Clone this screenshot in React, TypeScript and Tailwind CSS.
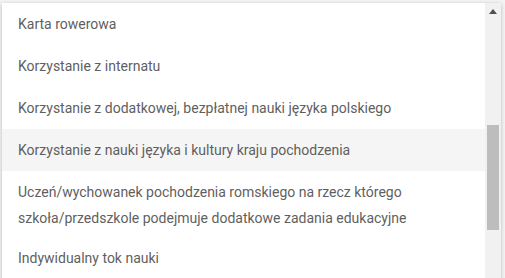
import React from "react";

const items: { label: string[]; active?: boolean }[] = [
  { label: ["Karta rowerowa"] },
  { label: ["Korzystanie z internatu"] },
  { label: ["Korzystanie z dodatkowej, bezpłatnej nauki języka polskiego"] },
  { label: ["Korzystanie z nauki języka i kultury kraju pochodzenia"], active: true },
  {
    label: [
      "Uczeń/wychowanek pochodzenia romskiego na rzecz którego",
      "szkoła/przedszkole podejmuje dodatkowe zadania edukacyjne",
    ],
  },
  { label: ["Indywidualny tok nauki"] },
];

export default function App() {
  return (
    <div
      className="w-[505px] h-[278px] overflow-hidden bg-[#f4f4f4]"
      style={{ fontFamily: "Roboto, 'Liberation Sans', sans-serif" }}
    >
      <div className="ml-[2px] mt-[3px] w-[499px] h-[290px] flex bg-white shadow-[0_1px_4px_rgba(0,0,0,0.25)]">
        <ul className="flex-1 flex flex-col">
          {items.map((it, i) => (
            <li
              key={i}
              className={`pl-[16px] pr-3 pt-2 text-[14px] leading-[26px] text-[#5f5f5f] ${
                it.label.length > 1 ? "pb-[6px]" : "pb-2"
              } ${it.active ? "bg-[#f5f5f5]" : "bg-white"}`}
            >
              {it.label.map((l, j) => (
                <div key={j}>{l}</div>
              ))}
            </li>
          ))}
        </ul>
        <div className="w-[16px] bg-[#f1f1f1] flex flex-col items-center">
          <div className="h-[17px] w-full flex items-center justify-center">
            <svg width="8" height="5" viewBox="0 0 8 5">
              <path d="M0 5 L4 0 L8 5 Z" fill="#505050" />
            </svg>
          </div>
          <div className="mt-[105px] h-[105px] w-[12px] bg-[#bdbdbd]" />
        </div>
      </div>
    </div>
  );
}
